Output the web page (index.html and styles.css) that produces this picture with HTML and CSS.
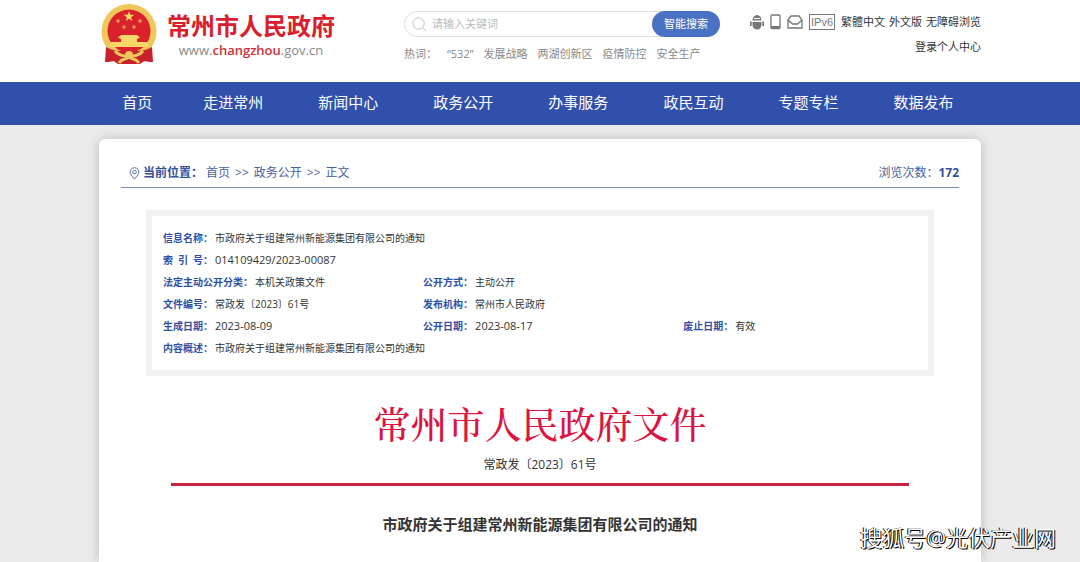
FILE: index.html
```html
<!DOCTYPE html>
<html lang="zh-CN">
<head>
<meta charset="utf-8">
<meta name="viewport" content="width=device-width, initial-scale=1">
<title>常州市人民政府</title>
<link rel="stylesheet" href="styles.css">
</head>
<body>
<header class="wrap header">
  <a class="logo" href="#">
    <svg class="emblem" viewBox="0 0 56 60" aria-hidden="true">
      <path fill="#c8202c" d="M6 40 5 58l8-1 4 3h22l4-3 8 1-1-18z"/>
      <circle cx="28" cy="27.500" r="27.500" fill="#f0c75c"/>
      <circle cx="28" cy="27" r="21.500" fill="#d9222b"/>
      <path fill="#f7d768" d="m28 7 1.300 3.800h4l-3.200 2.400 1.200 3.800-3.300-2.300-3.300 2.300 1.200-3.800-3.200-2.400h4z"/>
      <g fill="#f3a04f"><circle cx="17" cy="17" r="1.700"/><circle cx="39" cy="17" r="1.700"/><circle cx="23" cy="23" r="1.700"/><circle cx="33" cy="23" r="1.700"/></g>
      <path fill="#f7d768" d="M20 31h16l3 2.500-3 1.500v3h11v5H9v-5h11v-3l-3-1.500z"/>
      <path fill="#c8202c" d="M5 43c6 3 10 4 14 4h18c4 0 8-1 14-4l1 15-9-1-5 3H18l-5-3-9 1z"/>
      <path fill="none" stroke="#f0c75c" stroke-width="3" d="M14 47c4 5 9 5 14 5s10 0 14-5M18 59c3-5 6-3 10-6 4 3 7 1 10 6"/>
      <circle cx="28" cy="51" r="4" fill="#f0c75c"/>
    </svg>
    <span class="logo-text">
      <span class="logo-name">常州市人民政府</span>
      <span class="logo-url">www.<b>changzhou</b>.gov.cn</span>
    </span>
  </a>
  <div class="search">
    <form class="search-form">
      <svg class="search-icon" viewBox="0 0 16 16" aria-hidden="true"><circle cx="7" cy="7" r="6"/><path d="m11.500 11.500 3.500 3.500"/></svg>
      <input class="search-input" type="text" placeholder="请输入关键词" aria-label="请输入关键词">
      <button class="search-button" type="button">智能搜索</button>
    </form>
    <div class="hot">
      <span>热词：</span><a href="#">“532”</a><a href="#">发展战略</a><a href="#">两湖创新区</a><a href="#">疫情防控</a><a href="#">安全生产</a>
    </div>
  </div>
  <div class="tools">
    <div class="tools-row">
      <a class="tool" href="#" aria-label="机器人"><svg width="14" height="16" viewBox="0 0 14 16"><path fill="#777" d="M2.500 6.500a4.500 5.500 0 0 1 9 0zM2.500 8h9v3a4.500 4.500 0 0 1-9 0zM0 7.500h1.700V12H0zM12.300 7.500H14V12h-1.700z"/><path stroke="#fff" d="M4 4.500h6" fill="none"/></svg></a>
      <a class="tool" href="#" aria-label="手机"><svg width="11" height="16" viewBox="0 0 11 16"><rect x="1" y="1" width="9" height="13.500" rx="1" fill="none" stroke="#777" stroke-width="1.300"/><path fill="#777" d="M1 12h9v2.500H1z"/></svg></a>
      <a class="tool" href="#" aria-label="邮箱"><svg width="16" height="16" viewBox="0 0 16 16" fill="none" stroke="#777" stroke-width="1.300"><path d="M1 6l3-4h8l3 4v8H1zM1 6l4.500 4h5L15 6"/></svg></a>
      <a class="tool ipv6" href="#">IPv6</a>
      <span class="links"><a href="#">繁體中文</a><a href="#">外文版</a><a href="#">无障碍浏览</a></span>
    </div>
    <a href="#">登录个人中心</a>
  </div>
</header>
<nav class="nav">
  <ul class="wrap nav-list">
    <li><a href="#">首页</a></li>
    <li><a href="#">走进常州</a></li>
    <li><a href="#">新闻中心</a></li>
    <li><a href="#">政务公开</a></li>
    <li><a href="#">办事服务</a></li>
    <li><a href="#">政民互动</a></li>
    <li><a href="#">专题专栏</a></li>
    <li><a href="#">数据发布</a></li>
  </ul>
</nav>
<main class="wrap card">
  <div class="crumbs">
    <svg class="pin" viewBox="0 0 12 14" aria-hidden="true"><path d="M6 13C3 9.500 1.200 7.500 1.200 5.500a4.800 4.800 0 0 1 9.600 0C10.800 7.500 9 9.500 6 13z"/><circle cx="6" cy="5.500" r="2"/></svg>
    <b>当前位置：</b>
    <span class="path"><a href="#">首页</a><span>&gt;&gt;</span><a href="#">政务公开</a><span>&gt;&gt;</span><span>正文</span></span>
    <span class="views">浏览次数：<b>172</b></span>
  </div>
  <dl class="info">
    <div class="item full"><dt>信息名称：</dt><dd>市政府关于组建常州新能源集团有限公司的通知</dd></div>
    <div class="item full"><dt class="spread"><span>索</span><span>引</span><span>号：</span></dt><dd class="num">014109429/2023-00087</dd></div>
    <div class="item"><dt>法定主动公开分类：</dt><dd>本机关政策文件</dd></div>
    <div class="item rest"><dt>公开方式：</dt><dd>主动公开</dd></div>
    <div class="item"><dt>文件编号：</dt><dd>常政发〔2023〕61号</dd></div>
    <div class="item rest"><dt>发布机构：</dt><dd>常州市人民政府</dd></div>
    <div class="item"><dt>生成日期：</dt><dd class="num">2023-08-09</dd></div>
    <div class="item"><dt>公开日期：</dt><dd class="num">2023-08-17</dd></div>
    <div class="item"><dt>废止日期：</dt><dd>有效</dd></div>
    <div class="item full"><dt>内容概述：</dt><dd>市政府关于组建常州新能源集团有限公司的通知</dd></div>
  </dl>
  <article class="doc">
    <p class="doc-head">常州市人民政府文件</p>
    <p class="doc-no">常政发〔2023〕61号</p>
    <h1 class="doc-title">市政府关于组建常州新能源集团有限公司的通知</h1>
  </article>
</main>
<div class="watermark">搜狐号@光伏产业网</div>
</body>
</html>
```
FILE: styles.css
```css
* { box-sizing: border-box; }

body {
  position: relative;
  display: flex;
  flex-direction: column;
  min-height: 100vh;
  margin: 0;
  background: #ebebeb;
  color: #333;
  font: 11px/20px "Open Sans", "Noto Sans CJK SC", sans-serif;
  overflow-x: hidden;
}

a { color: inherit; text-decoration: none; }

.wrap {
  width: 100%;
  max-width: 882px;
  margin: 0 auto;
}

.header {
  display: grid;
  grid-template-columns: 305px 316px 1fr;
  align-items: start;
  height: 82px;
  box-shadow: 0 0 0 100vmax #fff;
  background: #fff;
  clip-path: inset(0 -100vmax);
}

.logo {
  display: flex;
  gap: 10px;
  padding: 4px 0 0 2px;
}

.emblem { width: 56px; height: 60px; }

.logo-text {
  display: flex;
  flex-direction: column;
  padding-top: 9px;
}

.logo-name {
  color: #d8202c;
  font: 700 24px/28px "Liberation Sans", "Noto Sans CJK SC", sans-serif;
}

.logo-url {
  color: #888;
  font-size: 13px;
  line-height: 18px;
  text-align: center;
}

.logo-url b { color: #d0303a; font-weight: 600; }

.search { padding-top: 11px; }

.search-form {
  display: flex;
  align-items: center;
  height: 26px;
  padding-left: 7px;
  border: 1px solid #ddd;
  border-radius: 13px;
}

.search-icon {
  width: 15px;
  height: 15px;
  fill: none;
  stroke: #bbb;
}

.search-input {
  flex: 1;
  min-width: 0;
  padding: 0 5px;
  border: 0;
  outline: 0;
  background: none;
  font: inherit;
}

.search-input::placeholder { color: #bbb; }

.search-button {
  width: 68px;
  height: 26px;
  margin-right: -1px;
  padding: 0;
  border: 0;
  border-radius: 13px;
  background: #4b71c4;
  color: #fff;
  font: inherit;
}

.hot {
  display: flex;
  gap: 10px;
  padding-top: 7px;
  color: #888;
  white-space: nowrap;
}

.tools {
  display: flex;
  flex-direction: column;
  align-items: flex-end;
  gap: 5px;
  padding-top: 12px;
  white-space: nowrap;
}

.tools-row, .links { display: flex; align-items: center; }
.tools-row { gap: 6px; }
.links { gap: 4px; }
.tool { display: flex; }

.ipv6 {
  padding: 0 1px;
  border: 1px solid #777;
  color: #777;
  font: 11px/14px "Liberation Sans", sans-serif;
}

.nav { background: #3050ab; }

.nav-list {
  display: grid;
  grid-template-columns: 2fr repeat(7, 3fr);
  padding: 0 0 2px;
  list-style: none;
  color: #fff;
  font-size: 15px;
  line-height: 41px;
  text-align: center;
}

.nav-list a { display: block; }

.card {
  flex: 1;
  margin-top: 14px;
  padding: 22px 22px 0;
  border-radius: 6px 6px 0 0;
  background: #fff;
  box-shadow: 0 0 12px #bbb;
}

.crumbs {
  display: flex;
  align-items: center;
  height: 27px;
  padding: 0 0 2px 8px;
  border-bottom: 1px solid #7f8db0;
  color: #4a61a0;
  font-size: 12px;
}

.crumbs b { color: #34509c; }

.pin {
  width: 11px;
  height: 13px;
  margin-right: 3px;
  fill: none;
  stroke: #4a61a0;
}

.path { display: flex; gap: 5px; padding-left: 3px; }
.views { margin-left: auto; }

.info {
  display: grid;
  grid-template-columns: 34% 34% 1fr;
  margin: 22px 25px 0;
  padding: 11px 0 11px 11px;
  border: 6px solid #f2f2f2;
  font-size: 10px;
  line-height: 22px;
}

.item { display: flex; gap: 2px; }
.full { grid-column: 1 / -1; }
.rest { grid-column: 2 / -1; }
.item dt { color: #3050a4; font-weight: 700; }
.item dd { margin: 0; }
.item .num { font-size: 11px; }

.spread {
  display: flex;
  justify-content: space-between;
  width: 50px;
}

.doc {
  padding: 22px 50px 0;
  text-align: center;
}

.doc p { margin: 0; }

.doc .doc-head {
  color: #dc143f;
  font: 500 37px/50px "Noto Serif CJK SC", "Source Han Serif SC", SimSun, "Noto Sans CJK SC", serif;
}

.doc-no {
  padding: 7px 0 8px;
  border-bottom: 3px solid #c9213f;
  font-size: 12px;
}

.doc-title {
  margin: 27px 0 0;
  font-size: 15px;
  line-height: 22px;
}

.watermark {
  position: absolute;
  right: 24px;
  bottom: 9px;
  color: #fff;
  font-size: 22px;
  line-height: 32px;
  text-shadow: 1px 1px 0 #000, -1px 0 0 #000;
}
```
